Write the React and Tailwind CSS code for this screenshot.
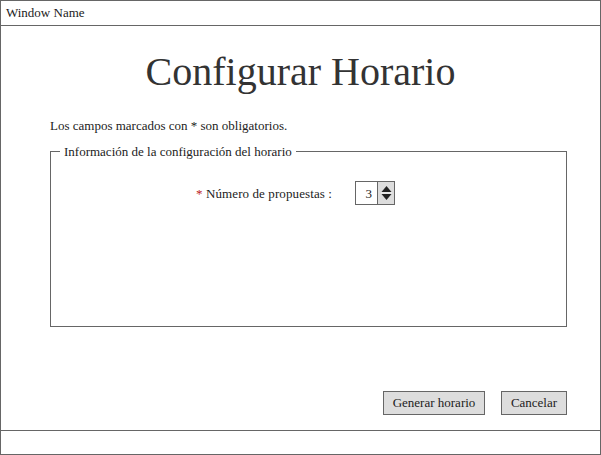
import React from 'react'

function Spinner({ value }) {
  return (
    <div className="flex h-[24px] w-[40px] border border-[#666] bg-white">
      <div className="flex w-[21px] items-center justify-end pr-[5px] text-[13px] leading-none text-[#222]">{value}</div>
      <div className="flex w-[17px] items-center justify-center border-l border-[#666] bg-[#ddd]">
        <svg width="13" height="18" viewBox="0 0 13 18">
          <path d="M1.5 8 L6.5 2 L11.5 8 Z" fill="#222" />
          <path d="M1.5 10 L6.5 16 L11.5 10 Z" fill="#222" />
          <line x1="1" y1="9" x2="12" y2="9" stroke="#f2f2f2" strokeWidth="1" />
        </svg>
      </div>
    </div>
  )
}

export default function App() {
  return (
    <div className="flex h-[455px] w-[601px] flex-col border border-[#666] bg-white font-['Liberation_Serif',serif] text-[#333]">
      {/* title bar */}
      <div className="flex h-[25px] shrink-0 items-center border-b border-[#666] pl-[5px] text-[13px] text-[#222]">
        Window Name
      </div>

      {/* body */}
      <div className="flex h-[405px] shrink-0 flex-col border-b border-[#666]">
        <h1 className="mt-[26px] text-center text-[40px] leading-none text-[#333]">Configurar Horario</h1>
        <p className="mt-[26px] pl-[49px] text-[13px] leading-[15px] text-[#222]">Los campos marcados con * son obligatorios.</p>

        <fieldset className="ml-[49px] mt-[11px] h-[183px] w-[517px] border border-[#666]">
          <legend className="ml-[9px] px-[4px] text-[13px] leading-[15px] text-[#222]">
            Información de la configuración del horario
          </legend>
          <div className="mt-[22px] flex items-center">
            <div className="w-[281px] text-right text-[13px] leading-[15px] tracking-[0.1px] text-[#222]">
              <span className="text-[#b22]">*</span> Número de propuestas :
            </div>
            <div className="ml-[23px]">
              <Spinner value="3" />
            </div>
          </div>
        </fieldset>

        <div className="mb-[15px] mt-auto flex justify-end gap-[16px] pr-[33px]">
          <button className="h-[24px] w-[102px] border border-[#666] bg-[#ddd] text-[13px] text-[#222]">Generar horario</button>
          <button className="h-[24px] w-[66px] border border-[#666] bg-[#ddd] text-[13px] text-[#222]">Cancelar</button>
        </div>
      </div>

      {/* footer */}
      <div className="flex-1" />
    </div>
  )
}
